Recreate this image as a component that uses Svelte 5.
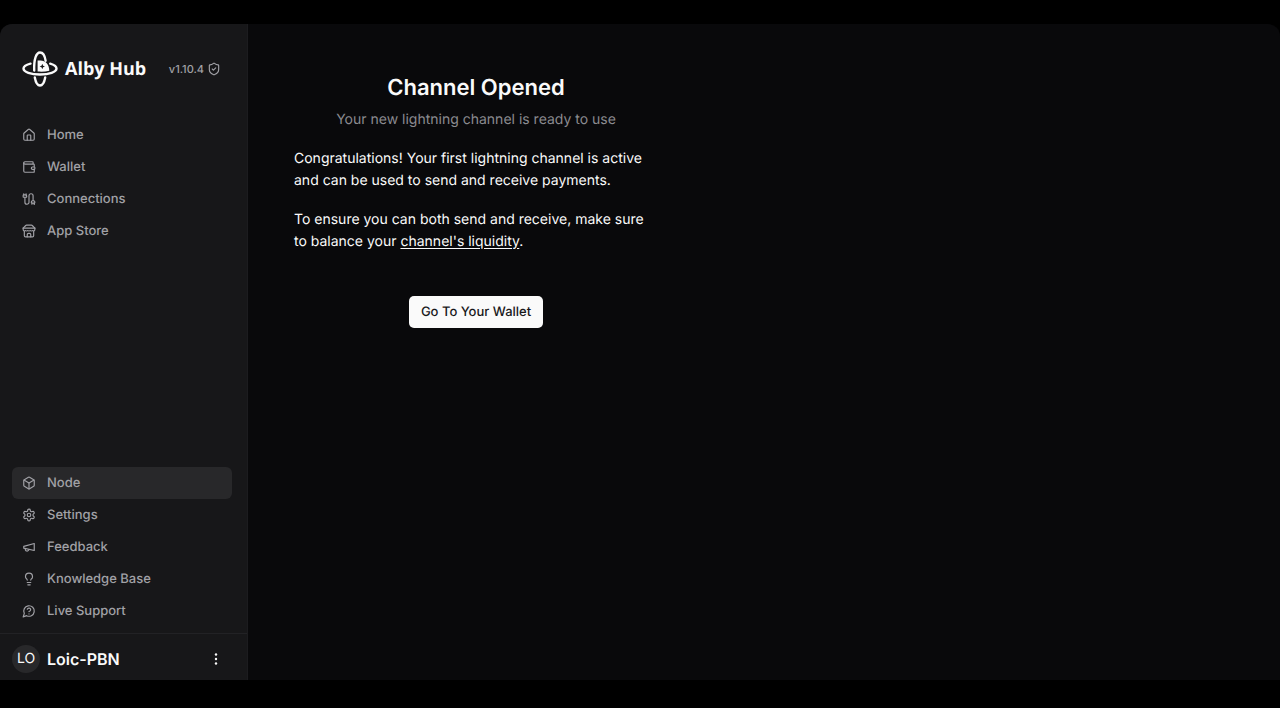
<script>
  const mainNav = [
    { label: 'Home', icon: 'home' },
    { label: 'Wallet', icon: 'wallet' },
    { label: 'Connections', icon: 'cable' },
    { label: 'App Store', icon: 'store' }
  ];
  const helpNav = [
    { label: 'Node', icon: 'box', active: true },
    { label: 'Settings', icon: 'settings' },
    { label: 'Feedback', icon: 'megaphone' },
    { label: 'Knowledge Base', icon: 'bulb' },
    { label: 'Live Support', icon: 'support' }
  ];
  const icons = {
    home: ['M15 21v-8a1 1 0 0 0-1-1h-4a1 1 0 0 0-1 1v8', 'M3 10a2 2 0 0 1 .7-1.5l7-6a2 2 0 0 1 2.6 0l7 6A2 2 0 0 1 21 10v9a2 2 0 0 1-2 2H5a2 2 0 0 1-2-2z'],
    wallet: ['M19 7V4a1 1 0 0 0-1-1H5a2 2 0 0 0 0 4h15a1 1 0 0 1 1 1v4h-3a2 2 0 0 0 0 4h3a1 1 0 0 0 1-1v-2a1 1 0 0 0-1-1', 'M3 5v14a2 2 0 0 0 2 2h15a1 1 0 0 0 1-1v-4'],
    cable: ['M17 21v-2a1 1 0 0 1-1-1v-1a2 2 0 0 1 2-2h2a2 2 0 0 1 2 2v1a1 1 0 0 1-1 1v2', 'M19 15V6.5a1 1 0 0 0-7 0v11a1 1 0 0 1-7 0V9', 'M21 21v-2h-4', 'M3 5V3', 'M7 5V3', 'M4 5h2a2 2 0 0 1 2 2v1a1 1 0 0 1-1 1H3a1 1 0 0 1-1-1V6a1 1 0 0 1 1-1z'],
    store: ['m2 7 4.4-4.4A2 2 0 0 1 7.800 2h8.400a2 2 0 0 1 1.400.600L22 7', 'M4 12v8a2 2 0 0 0 2 2h12a2 2 0 0 0 2-2v-8', 'M15 22v-4a2 2 0 0 0-2-2h-2a2 2 0 0 0-2 2v4', 'M2 7h20', 'M22 7v3a2 2 0 0 1-2 2 2.700 2.700 0 0 1-1.600-.600.700.700 0 0 0-.800 0A2.700 2.700 0 0 1 16 12a2.700 2.700 0 0 1-1.600-.600.700.700 0 0 0-.800 0A2.700 2.700 0 0 1 12 12a2.700 2.700 0 0 1-1.600-.600.700.700 0 0 0-.800 0A2.700 2.700 0 0 1 8 12a2.700 2.700 0 0 1-1.600-.600.700.700 0 0 0-.800 0A2.700 2.700 0 0 1 4 12a2 2 0 0 1-2-2V7'],
    box: ['M21 8a2 2 0 0 0-1-1.730l-7-4a2 2 0 0 0-2 0l-7 4A2 2 0 0 0 3 8v8a2 2 0 0 0 1 1.730l7 4a2 2 0 0 0 2 0l7-4A2 2 0 0 0 21 16Z', 'm3.300 7 8.700 5 8.700-5', 'M12 22V12'],
    settings: ['M12.220 2h-.440a2 2 0 0 0-2 2v.180a2 2 0 0 1-1 1.730l-.430.250a2 2 0 0 1-2 0l-.150-.080a2 2 0 0 0-2.730.730l-.220.380a2 2 0 0 0 .730 2.730l.150.100a2 2 0 0 1 1 1.720v.510a2 2 0 0 1-1 1.740l-.150.090a2 2 0 0 0-.730 2.730l.220.380a2 2 0 0 0 2.730.730l.150-.080a2 2 0 0 1 2 0l.430.250a2 2 0 0 1 1 1.730V20a2 2 0 0 0 2 2h.440a2 2 0 0 0 2-2v-.180a2 2 0 0 1 1-1.730l.430-.250a2 2 0 0 1 2 0l.150.080a2 2 0 0 0 2.730-.730l.220-.390a2 2 0 0 0-.730-2.730l-.150-.080a2 2 0 0 1-1-1.740v-.500a2 2 0 0 1 1-1.740l.150-.090a2 2 0 0 0 .730-2.730l-.220-.380a2 2 0 0 0-2.730-.730l-.150.080a2 2 0 0 1-2 0l-.430-.250a2 2 0 0 1-1-1.730V4a2 2 0 0 0-2-2z', 'M15 12a3 3 0 1 1-6 0 3 3 0 0 1 6 0z'],
    megaphone: ['m3 11 18-5v12L3 14v-3z', 'M11.600 16.800a3 3 0 1 1-5.800-1.600'],
    bulb: ['M15 14c.200-1 .700-1.700 1.500-2.500 1-.900 1.500-2.200 1.500-3.500A6 6 0 0 0 6 8c0 1 .200 2.200 1.500 3.500.700.700 1.300 1.500 1.500 2.500', 'M9 18h6', 'M10 22h4'],
    support: ['M7.900 20A9 9 0 1 0 4 16.100L2 22Z', 'M9.090 9a3 3 0 0 1 5.830 1c0 2-3 3-3 3', 'M12 17h.010'],
    shield: ['M20 13c0 5-3.500 7.500-7.660 8.950a1 1 0 0 1-.670-.010C7.500 20.500 4 18 4 13V6a1 1 0 0 1 1-1c2 0 4.500-1.200 6.240-2.720a1.170 1.170 0 0 1 1.520 0C14.510 3.810 17 5 19 5a1 1 0 0 1 1 1z', 'm9 12 2 2 4-4']
  };
</script>

{#snippet icon(name)}
  <svg class="icon" viewBox="0 0 24 24" aria-hidden="true">
    {#each icons[name] as d}<path {d} />{/each}
  </svg>
{/snippet}

{#snippet navList(items)}
  <ul>
    {#each items as item}
      <li>
        <a href="#top" class:active={item.active} aria-current={item.active ? 'page' : undefined}>
          {@render icon(item.icon)}
          {item.label}
        </a>
      </li>
    {/each}
  </ul>
{/snippet}

<div class="window">
  <aside>
    <header>
      <a class="brand" href="#top">
        <svg class="logo" viewBox="0 0 36 36" aria-hidden="true">
          <path d="M12.200 19.500C11.800 8 14.300 1.500 18 1.500c2.900 0 4.900 3.400 5.600 8.200" />
          <path d="M8.500 12.600C4.200 13.700 1.500 15.500 1.500 17.600c0 3.500 7.400 5.900 16.500 5.900s16.500-2.400 16.500-5.900c0-2.100-2.400-3.800-6.300-4.900" />
          <path d="M12.800 26.500c.900 4.900 2.800 8 5.200 8s4.300-3.100 5.200-8" />
          <path class="solid" fill-rule="evenodd" d="M15.600 9.500h2.700c5.200 0 9 3.800 9 10.300-3.500.800-7.700 1-11.700.700zM20.300 12.800l-.800 1.900-1.900.800 1.900.800.800 1.900.800-1.900 1.900-.800-1.900-.800z" />
        </svg>
        <span>Alby Hub</span>
      </a>
      <span class="version">v1.10.4 {@render icon('shield')}</span>
    </header>
    <nav aria-label="Main">{@render navList(mainNav)}</nav>
    <nav class="lower" aria-label="Node and help">{@render navList(helpNav)}</nav>
    <footer>
      <span class="avatar">LO</span>
      <strong>Loic-PBN</strong>
      <button class="more" aria-label="Account menu">
        <svg viewBox="0 0 16 16" aria-hidden="true">
          <circle cx="8" cy="3.500" r="1.200" /><circle cx="8" cy="8" r="1.200" /><circle cx="8" cy="12.500" r="1.200" />
        </svg>
      </button>
    </footer>
  </aside>
  <main>
    <section>
      <h1>Channel Opened</h1>
      <p class="lead">Your new lightning channel is ready to use</p>
      <p>Congratulations! Your first lightning channel is active and can be used to send and receive payments.</p>
      <p>To ensure you can both send and receive, make sure to balance your <a href="#top">channel's liquidity</a>.</p>
      <button class="primary">Go To Your Wallet</button>
    </section>
  </main>
</div>

<style>
  :global(body) { margin: 0; background: #000; }
  * { box-sizing: border-box; }
  .window {
    display: flex;
    min-height: calc(100vh - 52px);
    margin: 24px 0 28px;
    overflow: hidden;
    border-radius: 12px 12px 0 0;
    background: #09090b;
    color: #fafafa;
    font: 14px/22px Inter, sans-serif;
    text-rendering: geometricPrecision;
  }
  aside {
    display: flex;
    flex-direction: column;
    flex: 0 0 248px;
    border-right: 1px solid #1c1c1f;
    background: #171719;
  }
  header {
    display: flex;
    align-items: center;
    justify-content: space-between;
    padding: 27px 26px 30px 22px;
  }
  .brand {
    display: flex;
    align-items: center;
    gap: 7px;
    color: #fafafa;
    font: 700 18px/24px "Open Sans", sans-serif;
    text-decoration: none;
  }
  .logo {
    width: 36px;
    height: 36px;
    fill: none;
    stroke: currentColor;
    stroke-width: 2.4;
    stroke-linecap: round;
  }
  .logo .solid { fill: currentColor; stroke: none; }
  .version {
    display: flex;
    align-items: center;
    gap: 3px;
    color: #a1a1a6;
    font-size: 11px;
    font-weight: 500;
  }
  .icon {
    flex: none;
    width: 14px;
    height: 14px;
    fill: none;
    stroke: currentColor;
    stroke-width: 2;
    stroke-linecap: round;
    stroke-linejoin: round;
  }
  nav { padding: 2px 15px 2px 12px; }
  .lower { margin-top: auto; padding-bottom: 6px; }
  ul { margin: 0; padding: 0; list-style: none; }
  nav a {
    display: flex;
    align-items: center;
    gap: 11px;
    height: 32px;
    padding: 0 10px;
    border-radius: 6px;
    color: #a1a1a6;
    font-size: 13px;
    font-weight: 500;
    text-decoration: none;
  }
  nav a.active { background: #28282a; }
  footer {
    display: flex;
    align-items: center;
    height: 47px;
    padding: 4px 23px 0 12px;
    border-top: 1px solid #222225;
  }
  .avatar {
    display: grid;
    place-items: center;
    width: 28px;
    height: 28px;
    margin-right: 7px;
    border-radius: 50%;
    background: #28282a;
    font-size: 14px;
  }
  strong { font-size: 16px; font-weight: 600; }
  .more {
    display: flex;
    margin-left: auto;
    padding: 0;
    border: 0;
    background: none;
    color: inherit;
  }
  .more svg { width: 16px; height: 16px; fill: currentColor; }
  main { flex: 1; padding: 49px 46px 48px; }
  section {
    display: flex;
    flex-direction: column;
    align-items: center;
    max-width: 364px;
  }
  h1 { margin: 0; font-size: 22px; font-weight: 600; line-height: 30px; }
  p { width: 100%; margin: 0 0 17px; }
  .lead { margin-top: 6px; color: #8b8b90; text-align: center; }
  p a { color: inherit; text-underline-offset: 2px; }
  .primary {
    height: 32px;
    margin-top: 26px;
    padding: 0 12px;
    border: 0;
    border-radius: 5px;
    background: #fafafa;
    color: #18181b;
    font: 500 13px/20px Inter, sans-serif;
    text-rendering: inherit;
  }
</style>
